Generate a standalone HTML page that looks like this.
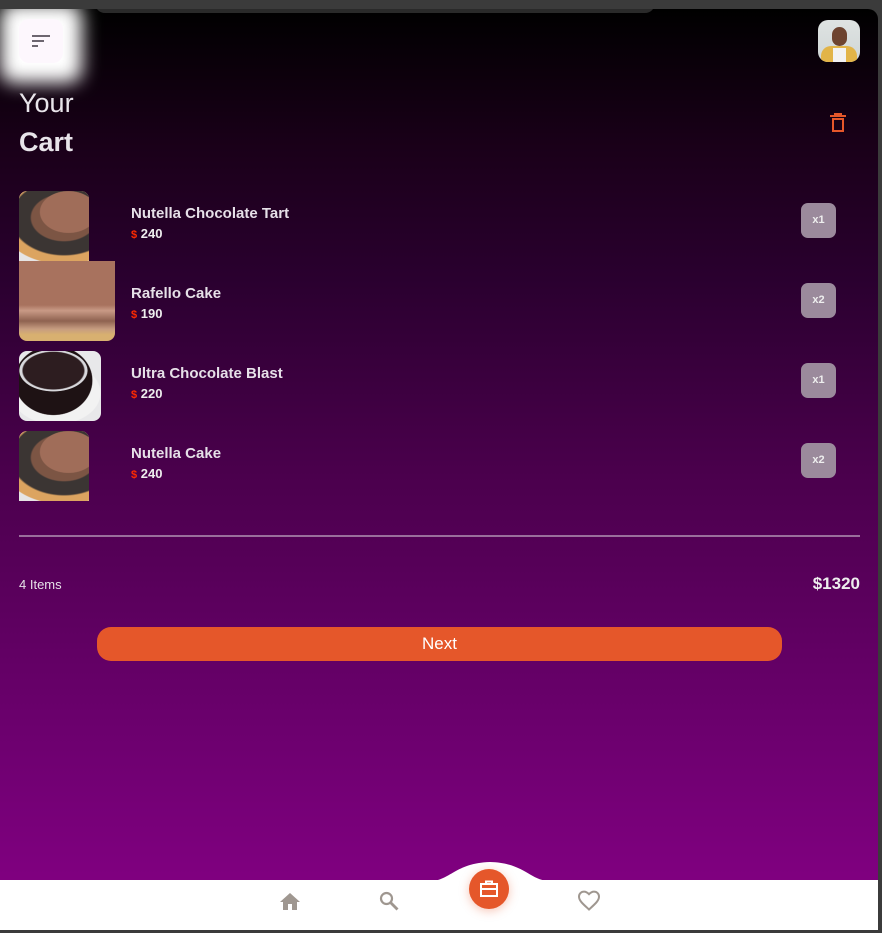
<!DOCTYPE html>
<html><head><meta charset="utf-8"><style>
*{margin:0;padding:0;box-sizing:border-box}
body{width:882px;height:933px;background:#3b3b3b;font-family:"Liberation Sans",sans-serif;position:relative;overflow:hidden}
.app{position:absolute;left:0;top:9px;width:878px;height:921px;background:linear-gradient(180deg,#000 0%,#1a0019 15%,#2b0030 30%,#4a004c 50%,#5c005e 65%,#6e0070 80%,#7f007f 94%);border-top-right-radius:10px;overflow:hidden}
.tab{position:absolute;left:95px;top:-9px;width:560px;height:13px;background:#2a2a2a;border-radius:0 0 10px 10px}
.glow{position:absolute;left:0;top:-6px;width:82px;height:80px;background:#fff;filter:blur(9px);border-radius:14px}
.menu{position:absolute;left:19px;top:10px;width:44px;height:44px;background:#fdf7fd;border-radius:10px}
.menu i{position:absolute;left:13px;height:2px;background:#6d6670}
.t{position:absolute;left:19px;color:#e8e4ea;font-size:27px}
.row{position:absolute;left:19px;width:840px;height:70px}
.img{position:absolute;left:0;top:0;width:70px;height:70px;border-radius:8px 8px 0 0;overflow:hidden}
.name{position:absolute;left:112px;top:14px;color:#e6e0e8;font-size:15px;font-weight:bold}
.price{position:absolute;left:112px;top:35px;color:#eee;font-size:13px;font-weight:bold}
.price b{color:#ff2a00;font-size:11px}
.q{position:absolute;left:782px;top:12px;width:35px;height:35px;background:#9b8a9c;border-radius:7px;color:#eee;font-size:11px;font-weight:bold;text-align:center;line-height:35px}
.nav{position:absolute;left:0;top:871px;width:878px;height:50px;background:#fff}
.nt{position:absolute;left:0;top:0;width:90px;height:70px;background:radial-gradient(ellipse 34% 32% at 55% 30%,#a06d59 0 92%,transparent 95%),radial-gradient(ellipse 60% 55% at 50% 38%,#7c5544 0 60%,#3b3533 63% 96%,transparent 100%),radial-gradient(ellipse 70% 60% at 50% 45%,#dca460 0 98%,transparent 100%),#e6e4e4}
</style></head><body>
<div class="app">
<div class="tab"></div>
<div class="glow"></div>
<div class="menu"><i style="top:16px;width:18px"></i><i style="top:21px;width:12px"></i><i style="top:26px;width:6px"></i></div>
<div style="position:absolute;left:818px;top:11px;width:42px;height:42px;border-radius:10px;background:linear-gradient(#dfe3e2,#cfd6d6);overflow:hidden">
<div style="position:absolute;left:14px;top:7px;width:15px;height:19px;border-radius:8px;background:#6e4430"></div>
<div style="position:absolute;left:3px;top:26px;width:36px;height:20px;border-radius:10px 10px 0 0;background:#e2b448"></div>
<div style="position:absolute;left:15px;top:28px;width:13px;height:16px;background:#f2f2f2"></div></div>
<div class="t" style="top:79px">Your</div>
<div class="t" style="top:118px;font-weight:bold">Cart</div>
<svg style="position:absolute;left:829px;top:104px" width="18" height="20" viewBox="0 0 18 20"><path d="M1 3h16M6 3V1h6v2" fill="none" stroke="#e5572a" stroke-width="2"/><path d="M4 6h10v12H4z" fill="none" stroke="#e5572a" stroke-width="2"/></svg>

<div class="row" style="top:182px"><div class="img"><div class="nt"></div></div><div class="name">Nutella Chocolate Tart</div><div class="price"><b>$</b> 240</div><div class="q">x1</div></div>
<div class="row" style="top:252px"><div class="img" style="width:96px;height:80px;border-radius:0 0 8px 8px;background:linear-gradient(180deg,#a8725e 0 55%,#c99a86 62%,#8f6250 75%,#c69c80 85%,#d8b070 92%)"></div><div class="name" style="top:24px">Rafello Cake</div><div class="price" style="top:45px"><b>$</b> 190</div><div class="q" style="top:22px">x2</div></div>
<div class="row" style="top:342px"><div class="img" style="width:82px;border-radius:8px;background:radial-gradient(ellipse 42% 30% at 42% 28%,#2d1d20 0 88%,#d8d8dc 92% 98%,transparent 100%),radial-gradient(ellipse 48% 50% at 42% 42%,#1e1214 0 98%,transparent 100%),radial-gradient(ellipse 55% 45% at 45% 60%,#f2f2f2 0 98%,transparent 100%),#e8e8ea"></div><div class="name" style="top:14px">Ultra Chocolate Blast</div><div class="price"><b>$</b> 220</div><div class="q">x1</div></div>
<div class="row" style="top:422px"><div class="img"><div class="nt"></div></div><div class="name">Nutella Cake</div><div class="price"><b>$</b> 240</div><div class="q">x2</div></div>

<div style="position:absolute;left:19px;top:526px;width:841px;height:2px;background:#9a6f9c"></div>
<div style="position:absolute;left:19px;top:568px;color:#e6e0e8;font-size:13px">4 Items</div>
<div style="position:absolute;right:18px;top:565px;color:#eee;font-size:17px;font-weight:bold">$1320</div>
<div style="position:absolute;left:97px;top:618px;width:685px;height:34px;background:#e5572a;border-radius:14px;color:#fff;font-size:17px;text-align:center;line-height:34px">Next</div>

<svg style="position:absolute;left:430px;top:850px" width="120" height="24" viewBox="0 0 120 24"><path d="M0 22 C20 22 25 4 60 3 C95 4 100 22 120 22 L120 24 L0 24Z" fill="#fff"/></svg>
<div class="nav"></div>
<svg style="position:absolute;left:278px;top:881px" width="24" height="24" viewBox="0 0 24 24"><path d="M10 20v-6h4v6h5v-8h3L12 3 2 12h3v8z" fill="#9f9790"/></svg>
<svg style="position:absolute;left:377px;top:880px" width="24" height="24" viewBox="0 0 24 24"><circle cx="9.5" cy="9.5" r="5.5" fill="none" stroke="#9f9790" stroke-width="2.2"/><path d="M13.5 13.5l7 7" stroke="#9f9790" stroke-width="2.8"/></svg>
<svg style="position:absolute;left:577px;top:880px" width="24" height="24" viewBox="0 0 24 24"><path d="M12 20.5l-1.4-1.3C5.4 14.5 2 11.4 2 7.6 2 4.8 4.2 2.6 7 2.6c1.6 0 3.3.8 5 2.6 1.7-1.8 3.4-2.6 5-2.6 2.8 0 5 2.2 5 5 0 3.8-3.4 6.9-8.6 11.6z" fill="none" stroke="#9f9790" stroke-width="2"/></svg>
<div style="position:absolute;left:469px;top:860px;width:40px;height:40px;border-radius:50%;background:#e5572a;box-shadow:0 2px 10px rgba(229,87,42,.35)">
<svg style="position:absolute;left:9px;top:9px" width="22" height="22" viewBox="0 0 22 22"><path d="M8 6V3.5h6V6M3 6h16v12H3zM3 11h16" fill="none" stroke="#fff" stroke-width="2"/></svg></div>
</div>
</body></html>
